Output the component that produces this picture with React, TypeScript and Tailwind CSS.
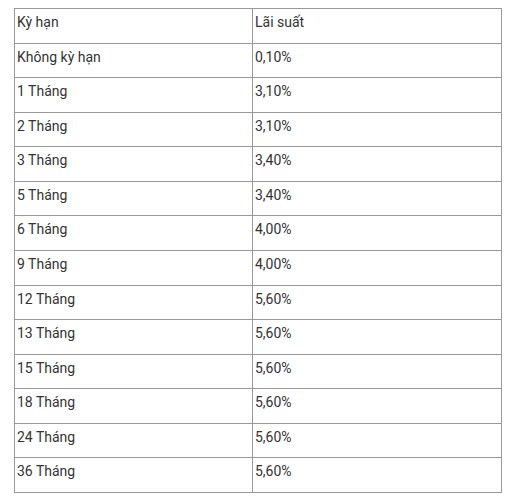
import React from "react";

const rows: [string, string][] = [
  ["Kỳ hạn", "Lãi suất"],
  ["Không kỳ hạn", "0,10%"],
  ["1 Tháng", "3,10%"],
  ["2 Tháng", "3,10%"],
  ["3 Tháng", "3,40%"],
  ["5 Tháng", "3,40%"],
  ["6 Tháng", "4,00%"],
  ["9 Tháng", "4,00%"],
  ["12 Tháng", "5,60%"],
  ["13 Tháng", "5,60%"],
  ["15 Tháng", "5,60%"],
  ["18 Tháng", "5,60%"],
  ["24 Tháng", "5,60%"],
  ["36 Tháng", "5,60%"],
];

export default function App() {
  return (
    <div
      className="w-[511px] h-[497px] bg-white overflow-hidden pt-[8px] pl-[14px] text-[#333] text-[14px] leading-[20px]"
      style={{ fontFamily: "Roboto, 'Liberation Sans', sans-serif" }}
    >
      <div className="grid grid-cols-[238px_249px] auto-rows-[34.57px] w-[488px] border-t border-l border-[#999] box-border">
        {rows.map(([a, b], i) => (
          <React.Fragment key={i}>
            <div className="border-r border-b border-[#999] pl-[2px] pt-[3px]">{a}</div>
            <div className="border-r border-b border-[#999] pl-[2px] pt-[3px]">{b}</div>
          </React.Fragment>
        ))}
      </div>
    </div>
  );
}
